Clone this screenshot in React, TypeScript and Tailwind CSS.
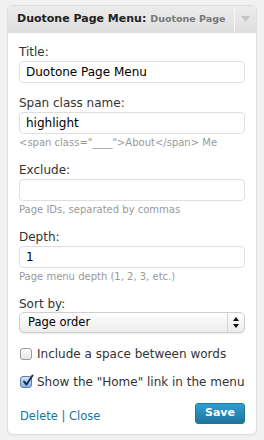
import React from 'react';

const FONT = { fontFamily: '"DejaVu Sans", Verdana, sans-serif' };

const Field: React.FC<{ label: string; value: string; hint?: string; top: string }> = ({ label, value, hint, top }) => (
    <div className={top}>
        <label className="block text-[12px] leading-[16px] text-[#333] mb-px">{label}</label>
        <div className="h-[22px] border border-[#dfdfdf] rounded-[4px] bg-white px-[6px] flex items-center text-[12px] text-black">
            {value}
        </div>
        {hint && <div className="mt-[2px] text-[10px] leading-[14px] text-[#999]">{hint}</div>}
    </div>
);

export default function App() {
    return (
        <div className="w-[264px] h-[440px] bg-[#f1f1f1] pt-[5px] px-[7px]" style={FONT}>
            <div className="w-[250px] bg-white border border-[#dfdfdf] rounded-[6px] shadow-[0_1px_1px_rgba(0,0,0,0.04)] overflow-hidden">
                {/* Header */}
                <div className="h-[27px] flex bg-gradient-to-b from-[#ececec] to-[#dfdfdf] border-b border-[#dfdfdf]">
                    <div className="flex-1 min-w-0 whitespace-nowrap pl-[9px] flex items-center">
                        <span className="text-[11px] font-bold text-[#222]">Duotone Page Menu:</span>
                        <span className="text-[9.5px] font-bold text-[#777] ml-[4px]">Duotone Page</span>
                    </div>
                    <div className="w-[22px] border-l border-[#f6f6f6] flex items-center justify-center">
                        <svg width="9" height="6" viewBox="0 0 9 6"><path d="M0 0h9L4.5 6z" fill="#c4c4c4" /></svg>
                    </div>
                </div>

                {/* Body */}
                <div className="px-[11px] pt-[11px] pb-[10px]">
                    <Field label="Title:" value="Duotone Page Menu" top="" />
                    <Field label="Span class name:" value="highlight" hint={'<span class="____">About</span> Me'} top="mt-[12px]" />
                    <Field label="Exclude:" value="" hint="Page IDs, separated by commas" top="mt-[12px]" />
                    <Field label="Depth:" value="1" hint="Page menu depth (1, 2, 3, etc.)" top="mt-[12px]" />

                    <div className="mt-[12px]">
                        <label className="block text-[12px] leading-[16px] text-[#333]">Sort by:</label>
                        <div className="h-[21px] border border-[#cfcfcf] rounded-[5px] bg-gradient-to-b from-[#fefefe] to-[#ececec] flex items-center shadow-[0_1px_1px_rgba(0,0,0,0.08)]">
                            <span className="flex-1 pl-[8px] text-[11.5px] text-black">Page order</span>
                            <div className="w-[17px] h-full border-l border-[#d4d4d4] flex items-center justify-center">
                                <svg width="6" height="11" viewBox="0 0 6 11">
                                    <path d="M3 0L6 4H0z" fill="#111" />
                                    <path d="M3 11L6 7H0z" fill="#111" />
                                </svg>
                            </div>
                        </div>
                    </div>

                    <div className="mt-[11px] flex items-center h-[20px] gap-[5px] text-[12px] text-[#333]">
                        <span className="w-[12px] h-[12px] ml-px border border-[#9a9a9a] rounded-[3px] bg-gradient-to-b from-white to-[#e6e6e6]" />
                        <span>Include a space between words</span>
                    </div>
                    <div className="mt-[8px] flex items-center h-[20px] gap-[5px] text-[12px] text-[#333] whitespace-nowrap">
                        <span className="relative w-[12px] h-[12px] ml-px border border-[#5a7fb5] rounded-[3px] bg-gradient-to-b from-[#d3e4f8] to-[#8fb3e3]">
                            <svg className="absolute left-[1px] -top-[3px]" width="12" height="13" viewBox="0 0 12 13">
                                <path d="M2 7.5L4.5 10.5L10.5 1.5" stroke="#1a2f55" strokeWidth="2" fill="none" strokeLinecap="round" strokeLinejoin="round" />
                            </svg>
                        </span>
                        <span>Show the "Home" link in the menu</span>
                    </div>

                    <div className="mt-[11px] flex items-end justify-between">
                        <div className="text-[11.5px] leading-[16px] text-[#21759b] pl-px">
                            Delete | Close
                        </div>
                        <button className="h-[21px] px-[9px] rounded-[3px] border border-[#21759b] bg-gradient-to-b from-[#2e9fd2] to-[#21759b] text-white text-[11px] font-bold">
                            Save
                        </button>
                    </div>
                </div>
            </div>
        </div>
    );
}
